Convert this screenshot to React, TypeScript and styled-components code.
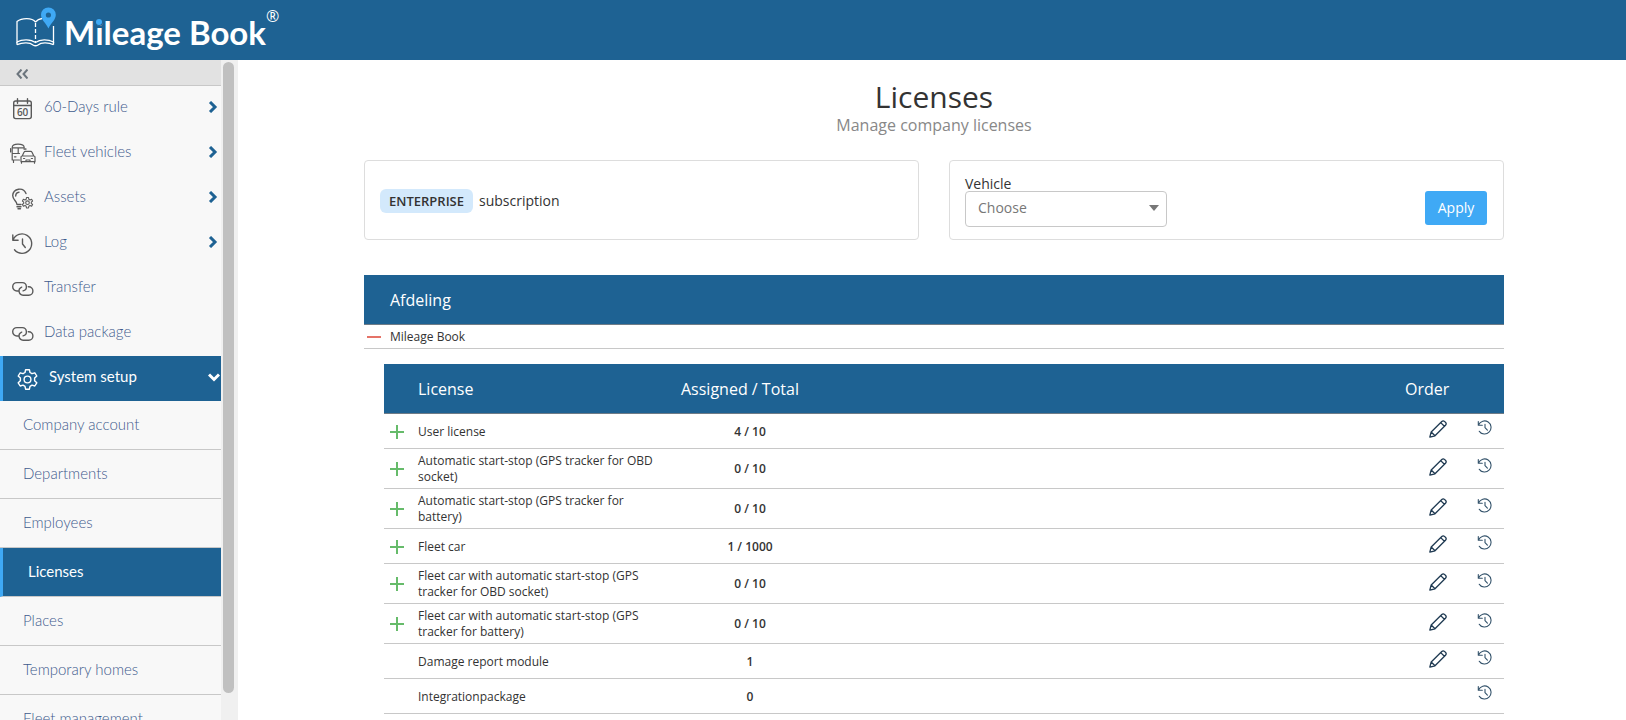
import React from "react";
import styled, { createGlobalStyle, css } from "styled-components";

const color = {
  brand: "#1e6293",
  accent: "#3fa9f5",
  ink: "#333333",
  nav: "#3f5b8d",
  line: "#c8c8c8",
};

const GlobalStyle = createGlobalStyle`
  *, *::before, *::after { box-sizing: border-box; }
  body {
    margin: 0;
    background: #fff;
    color: ${color.ink};
    font-family: "Open Sans", sans-serif;
    font-size: 14px;
    line-height: 20px;
  }
`;

const Page = styled.div`
  display: flex;
  flex-direction: column;
  height: 100vh;
  overflow: hidden;
`;

const TopBar = styled.header`
  flex: none;
  display: flex;
  height: 60px;
  padding-left: 15px;
  background: ${color.brand};
`;

const Brand = styled.a`
  display: flex;
  align-items: flex-start;
  color: #fff;
  text-decoration: none;
`;

const BookMark = styled.svg`
  width: 42px;
  height: 42px;
  margin-top: 6px;
`;

const BrandName = styled.span`
  margin-left: 7px;
  font: 700 33px/64px Lato, sans-serif;
`;

const BlueDot = styled.span`
  position: relative;
  &::before {
    content: "";
    position: absolute;
    left: 1px;
    top: 7px;
    width: 6px;
    height: 6px;
    border-radius: 50%;
    background: ${color.accent};
    box-shadow: 0 0 0 1px ${color.brand};
  }
`;

const Registered = styled.span`
  margin-top: 6px;
  font: 400 16px/20px "Open Sans", sans-serif;
`;

const Body = styled.div`
  flex: 1;
  display: flex;
  min-height: 0;
`;

const Sidebar = styled.aside`
  flex: none;
  display: flex;
  width: 238px;
  overflow: hidden;
  background: #f0f0f0;
`;

const Nav = styled.nav`
  flex: 1;
  background: #f8f8f8;
  font-family: Lato, sans-serif;
  font-size: 15px;
  font-weight: 300;
`;

const ScrollTrack = styled.div`
  flex: none;
  display: flex;
  width: 17px;
  padding: 2px 4px 27px 2px;
`;

const ScrollThumb = styled.div`
  flex: 1;
  border-radius: 6px;
  background: #c0c0c0;
`;

const CollapseButton = styled.button`
  display: flex;
  align-items: center;
  width: 100%;
  height: 26px;
  padding: 2px 16px 0;
  border: 0;
  border-bottom: 1px solid ${color.line};
  background: #e2e2e2;
  color: #6c757d;
`;

const activeLink = css`
  border-left: 3px solid ${color.accent};
  background: ${color.brand};
  color: #fff;
  font-weight: 400;
`;

const NavLink = styled.a<{ $active?: boolean }>`
  display: flex;
  align-items: center;
  height: 45px;
  padding: 0 2px 0 8px;
  color: ${color.nav};
  text-decoration: none;
  ${(p) => p.$active && activeLink}
  ${(p) => p.$active && "padding: 0 1px 0 10px;"}
`;

const NavIcon = styled.svg`
  flex: none;
  width: 28px;
  height: 28px;
  fill: none;
  stroke: currentColor;
  stroke-width: 1.4;
  stroke-linecap: round;
  stroke-linejoin: round;
  color: ${(p) => p.color};
`;

const NavText = styled.span`
  flex: 1;
  padding: 0 0 6px 8px;
`;

const Chevron = styled.svg<{ $light?: boolean }>`
  width: 12px;
  height: 12px;
  margin-bottom: 3px;
  fill: none;
  stroke: ${(p) => (p.$light ? "#fff" : color.brand)};
  stroke-width: 3;
`;

const SubLink = styled.a<{ $active?: boolean }>`
  display: flex;
  align-items: center;
  height: 49px;
  padding: 0 23px 2px;
  border-bottom: 1px solid ${color.line};
  color: ${color.nav};
  text-decoration: none;
  ${(p) => p.$active && activeLink}
  ${(p) => p.$active && "padding-left: 25px;"}
`;

const Main = styled.main`
  flex: 1;
  min-width: 0;
  padding: 17px 0 0 4px;
`;

const Container = styled.div`
  max-width: 1140px;
  margin: 0 auto;
`;

const Title = styled.h1`
  margin: 0;
  font-size: 30px;
  line-height: 40px;
  font-weight: 400;
  text-align: center;
`;

const Subtitle = styled.p`
  margin: 0 0 27px;
  color: #888;
  font-size: 16px;
  line-height: 16px;
  text-align: center;
`;

const Panels = styled.div`
  display: grid;
  grid-template-columns: 1fr 1fr;
  gap: 30px;
  margin-bottom: 35px;
`;

const Panel = styled.section`
  display: flex;
  align-items: center;
  justify-content: space-between;
  height: 80px;
  padding: 0 16px 0 15px;
  border: 1px solid #ddd;
  border-radius: 4px;
`;

const Subscription = styled.p`
  display: flex;
  align-items: center;
  gap: 6px;
  margin: 2px 0 0;
`;

const Badge = styled.strong`
  padding: 0 9px;
  border-radius: 6px;
  background: #d3e9fc;
  font-size: 13px;
  line-height: 24px;
  font-weight: 600;
`;

const Field = styled.div`
  display: flex;
  flex-direction: column;
`;

const FieldLabel = styled.label`
  margin-bottom: -2px;
  line-height: 19px;
`;

const SelectBox = styled.div`
  position: relative;
  width: 202px;
`;

const Select = styled.select`
  display: block;
  width: 100%;
  height: 36px;
  padding: 0 30px 2px 12px;
  appearance: none;
  border: 1px solid #c8c8c8;
  border-radius: 4px;
  background: #fff;
  color: #777;
  font: 14px/20px "Open Sans", sans-serif;
`;

const SelectArrow = styled.svg`
  position: absolute;
  right: 8px;
  top: 14px;
  width: 10px;
  height: 6px;
  fill: #777;
  pointer-events: none;
`;

const ApplyButton = styled.button`
  width: 62px;
  height: 34px;
  margin-top: 16px;
  padding: 0;
  border: 0;
  border-radius: 3px;
  background: ${color.accent};
  color: #fff;
  font: 500 14px/20px "Open Sans", sans-serif;
`;

const Table = styled.table`
  width: 100%;
  table-layout: fixed;
  border-collapse: separate;
  border-spacing: 0;
  font-size: 12px;
  line-height: 16px;
`;

const Col = styled.col<{ $w?: number }>`
  ${(p) => p.$w && `width: ${p.$w}px;`}
`;

const HeadCell = styled.th`
  height: 50px;
  padding: 0;
  border-bottom: 1px solid #6f7c87;
  background: ${color.brand};
  color: #fff;
  font-size: 16px;
  line-height: 20px;
  font-weight: 500;
  text-align: left;
  white-space: nowrap;
`;

const Cell = styled.td<{ $short?: boolean }>`
  height: ${(p) => (p.$short ? 24 : 35)}px;
  padding: ${(p) => (p.$short ? "0" : "4px 0 3px")};
  border-bottom: 1px solid ${color.line};
`;

const NameCell = styled(Cell)`
  padding-right: 20px;
`;

const CountCell = styled(Cell)`
  font-weight: 600;
  text-align: center;
`;

const ActionCell = styled(Cell)`
  padding: 0 0 4px;
`;

const NestedCell = styled.td`
  padding: 15px 0 0 20px;
`;

const IconButton = styled.button<{ $push?: number }>`
  display: block;
  margin: 0 auto 0 ${(p) => (p.$push === undefined ? "auto" : `${p.$push}px`)};
  padding: 0;
  border: 0;
  background: none;
  line-height: 0;
`;

const Glyph = styled.svg`
  display: block;
  width: 18px;
  height: 18px;
  fill: none;
  stroke-linecap: round;
  stroke-linejoin: round;
`;

const CalendarIcon = () => (
  <>
    <rect x="5.7" y="6" width="17.6" height="17.6" rx="2" />
    <path d="M5.7 10.500H23.300M9.500 3.800v4.400M19.500 3.800v4.400" />
    <text x="14.600" y="21" textAnchor="middle" fontSize="10" fontFamily="Open Sans, sans-serif" fontWeight="600" fill="currentColor" stroke="none">60</text>
  </>
);

const FleetIcon = () => (
  <g strokeWidth="1.200">
    <path d="M11.500 20H4.200V7.500C4.200 5.200 6 4.200 10 4.200S16.200 5.200 16.200 7.500V9.500M4.200 13.500H11.500M4.500 7.800H16M10.200 7.800v5.700M2.600 8.500v3.500M17.800 8.500V9.500M5.500 20v2.500M6.500 16.800h1.500" />
    <path d="M14.200 16l1.900-4q.3-.7 1-.7h5.800q.7 0 1 .7l1.900 4M13 17q0-1 1-1h12q1 0 1 1v4.700H13zM13.500 21.700v1.500M26.500 21.700v1.500M15.500 18.500h1.200M23.300 18.500h1.200M18 21.500v-1.500h4v1.500" />
  </g>
);

const AssetsIcon = () => (
  <>
    <path d="M9 19.500c0-3.200-4.300-4.500-4.300-9A6.900 6.900 0 0 1 18 8.500M7.700 11c0-2 1.500-3.600 3.300-3.800M9 19.500h4M9 21.800h4M10 23.700h2.500" />
    <g strokeWidth="1.100">
      <circle cx="19.500" cy="17.700" r="1.800" />
      <path d="M18.500 12.500h2l.3 1.700 1.200.7 1.600-.6 1 1.700-1.300 1.100v1.300l1.300 1.100-1 1.700-1.600-.6-1.200.7-.3 1.700h-2l-.3-1.700-1.200-.7-1.600.6-1-1.700 1.300-1.100v-1.300l-1.300-1.100 1-1.700 1.600.6 1.200-.7z" />
    </g>
  </>
);

const ClockBackIcon = () => (
  <path d="M4.800 5v5.200h5.300M5 10a9.700 9.700 0 1 1 1.500 9.800M14.500 9v5l2.800 3.500" />
);

const LinkIcon = () => (
  <path d="M10 16H8.900a4.200 4.200 0 0 1 0-8.400h5.400a4.200 4.200 0 0 1 .8 8.300M20.300 11.800h.4a4.200 4.200 0 0 1 0 8.400h-5.600a4.200 4.200 0 0 1-1.400-8.100" />
);

const GearIcon = () => (
  <>
    <circle cx="14.500" cy="14.500" r="3.400" />
    <path d="M12.600 4.700h3.800l.6 2.800 2 1.200 2.800-.9 2 3.200-2.200 2.100v2.600l2.200 2.100-2 3.200-2.800-.9-2 1.200-.6 2.900h-3.800l-.6-2.900-2-1.200-2.800.9-2-3.200 2.200-2.100v-2.600l-2.200-2.100 2-3.200 2.800.9 2-1.200z" />
  </>
);

const PencilGlyph = () => (
  <Glyph viewBox="0 0 18 18" stroke="#1f3a52" strokeWidth="1.300" aria-hidden="true">
    <path d="M.8 17.200l1.400-5.200L12.800 1.500q1.400-1.400 2.900.1l.7.700q1.500 1.500.1 2.900L6 15.800zM2.200 12L6 15.800M11.700 2.600l3.700 3.700" />
  </Glyph>
);

const HistoryGlyph = () => (
  <Glyph viewBox="0 0 18 18" stroke="#34536b" strokeWidth="1.100" aria-hidden="true">
    <path d="M1.300 1.500v3.700h4M1.600 4.800a6.500 6.500 0 1 1 .7 6.500M3.500 12.600l.5.500M8 4.200v3.500l2.400 2.500" />
  </Glyph>
);

const PlusGlyph = () => (
  <Glyph viewBox="0 0 18 18" stroke="#66bb6a" strokeWidth="2" aria-hidden="true">
    <path strokeLinecap="butt" d="M2 9H16M9 2V16" />
  </Glyph>
);

const MinusGlyph = () => (
  <Glyph viewBox="0 0 18 18" stroke="#e57368" strokeWidth="2" aria-hidden="true">
    <path strokeLinecap="butt" d="M2 9H16" />
  </Glyph>
);

const menu = [
  { label: "60-Days rule", Icon: CalendarIcon, opens: true },
  { label: "Fleet vehicles", Icon: FleetIcon, opens: true },
  { label: "Assets", Icon: AssetsIcon, opens: true },
  { label: "Log", Icon: ClockBackIcon, opens: true },
  { label: "Transfer", Icon: LinkIcon, opens: false },
  { label: "Data package", Icon: LinkIcon, opens: false },
];

const setupMenu = [
  "Company account",
  "Departments",
  "Employees",
  "Licenses",
  "Places",
  "Temporary homes",
  "Fleet management",
];

const licenses = [
  { name: "User license", count: "4 / 10", expands: true, editable: true },
  { name: "Automatic start-stop (GPS tracker for OBD socket)", count: "0 / 10", expands: true, editable: true },
  { name: "Automatic start-stop (GPS tracker for battery)", count: "0 / 10", expands: true, editable: true },
  { name: "Fleet car", count: "1 / 1000", expands: true, editable: true },
  { name: "Fleet car with automatic start-stop (GPS tracker for OBD socket)", count: "0 / 10", expands: true, editable: true },
  { name: "Fleet car with automatic start-stop (GPS tracker for battery)", count: "0 / 10", expands: true, editable: true },
  { name: "Damage report module", count: "1", expands: false, editable: true },
  { name: "Integrationpackage", count: "0", expands: false, editable: false },
];

const Header = () => (
  <TopBar>
    <Brand href="#">
      <BookMark viewBox="0 0 42 42" fill="none" stroke="#fff" strokeWidth="1.300" aria-hidden="true">
        <path d="M20.500 16C17 11.500 7 11.500 2 15.500V36C7 33 16 33 20.500 36.500 25 33 33 33 38.500 36V20M20.500 16Q23 13 27 12.500M2 38.700c6-2.500 13-2.200 16 .3q2.500 1.500 5 0c3-2.500 10-2.800 15.500-.3" />
        <path d="M2 36v2.700M38.500 36v2.700" />
        <path d="M20.500 17V36" strokeDasharray="4 2" />
        <path d="M33.400 22.500C31 17 26 14 26 8.800a7.400 7.400 0 0 1 14.800 0C40.800 14 36 17 33.400 22.500z" fill={color.accent} stroke="none" />
        <circle cx="33.400" cy="9" r="2.600" fill={color.brand} stroke="none" />
      </BookMark>
      <BrandName>M<BlueDot>i</BlueDot>leage Book</BrandName>
      <Registered>®</Registered>
    </Brand>
  </TopBar>
);

const SideMenu = () => (
  <Sidebar>
    <Nav>
      <CollapseButton aria-label="Collapse menu">
        <svg width="12" height="10" viewBox="0 0 12 10" fill="none" stroke="currentColor" strokeWidth="2">
          <path d="M5.500.5L1.500 5l4 4.500M11.500.5L7.500 5l4 4.500" />
        </svg>
      </CollapseButton>
      {menu.map(({ label, Icon, opens }) => (
        <NavLink href="#" key={label}>
          <NavIcon viewBox="0 0 28 28" color="#5a5a5a"><Icon /></NavIcon>
          <NavText>{label}</NavText>
          {opens && <Chevron viewBox="0 0 12 12"><path d="M3 1l5 5-5 5" /></Chevron>}
        </NavLink>
      ))}
      <NavLink href="#" $active>
        <NavIcon viewBox="0 0 28 28" color="#fff"><GearIcon /></NavIcon>
        <NavText>System setup</NavText>
        <Chevron viewBox="0 0 12 12" $light><path d="M1 3.500l5 5 5-5" /></Chevron>
      </NavLink>
      {setupMenu.map((label) => (
        <SubLink href="#" key={label} $active={label === "Licenses"}>{label}</SubLink>
      ))}
    </Nav>
    <ScrollTrack><ScrollThumb /></ScrollTrack>
  </Sidebar>
);

const LicenseTable = () => (
  <Table>
    <colgroup>
      <Col $w={34} /><Col $w={263} /><Col $w={138} /><Col /><Col $w={66} /><Col $w={33} />
    </colgroup>
    <thead>
      <tr>
        <HeadCell />
        <HeadCell scope="col">License</HeadCell>
        <HeadCell scope="col">Assigned / Total</HeadCell>
        <HeadCell />
        <HeadCell scope="col">Order</HeadCell>
        <HeadCell />
      </tr>
    </thead>
    <tbody>
      {licenses.map((row) => (
        <tr key={row.name}>
          <Cell>
            {row.expands && <IconButton $push={4} aria-label={`Expand ${row.name}`}><PlusGlyph /></IconButton>}
          </Cell>
          <NameCell>{row.name}</NameCell>
          <CountCell>{row.count}</CountCell>
          <Cell />
          <ActionCell>
            {row.editable && <IconButton aria-label={`Edit ${row.name}`}><PencilGlyph /></IconButton>}
          </ActionCell>
          <ActionCell>
            <IconButton $push={6} aria-label={`History of ${row.name}`}><HistoryGlyph /></IconButton>
          </ActionCell>
        </tr>
      ))}
    </tbody>
  </Table>
);

export default function App() {
  return (
    <Page>
      <GlobalStyle />
      <Header />
      <Body>
        <SideMenu />
        <Main>
          <Container>
            <Title>Licenses</Title>
            <Subtitle>Manage company licenses</Subtitle>
            <Panels>
              <Panel>
                <Subscription><Badge>ENTERPRISE</Badge> subscription</Subscription>
              </Panel>
              <Panel>
                <Field>
                  <FieldLabel htmlFor="vehicle">Vehicle</FieldLabel>
                  <SelectBox>
                    <Select id="vehicle"><option>Choose</option></Select>
                    <SelectArrow viewBox="0 0 10 6"><path d="M0 0H10L5 6z" /></SelectArrow>
                  </SelectBox>
                </Field>
                <ApplyButton>Apply</ApplyButton>
              </Panel>
            </Panels>
            <Table>
              <colgroup><Col $w={26} /><Col /></colgroup>
              <thead>
                <tr><HeadCell /><HeadCell scope="col">Afdeling</HeadCell></tr>
              </thead>
              <tbody>
                <tr>
                  <Cell $short><IconButton $push={1} aria-label="Collapse Mileage Book"><MinusGlyph /></IconButton></Cell>
                  <Cell $short>Mileage Book</Cell>
                </tr>
                <tr><NestedCell colSpan={2}><LicenseTable /></NestedCell></tr>
              </tbody>
            </Table>
          </Container>
        </Main>
      </Body>
    </Page>
  );
}
